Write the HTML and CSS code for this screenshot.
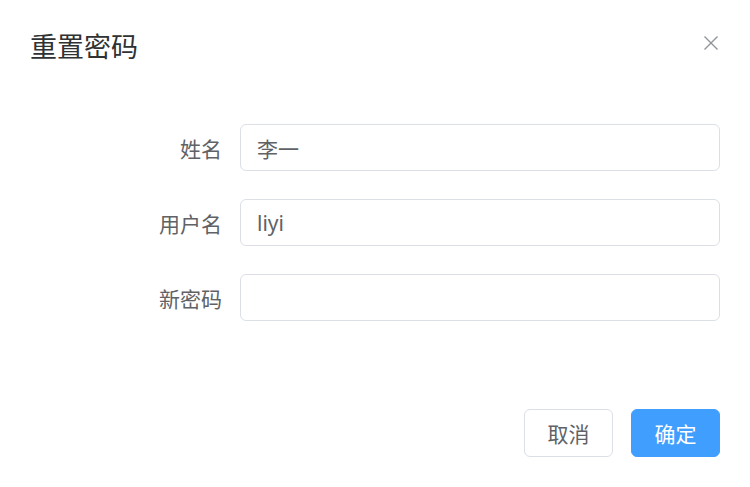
FILE: index.html
```html
<!DOCTYPE html>
<html lang="zh">
<head>
<meta charset="utf-8">
<title>重置密码</title>
<link rel="stylesheet" href="styles.css">
</head>
<body>
<div class="dialog">
  <div class="dialog-header">
    <span class="dialog-title">重置密码</span>
    <button class="dialog-close" aria-label="Close">
      <svg viewBox="0 0 16 16" width="16" height="16"><path d="M1.5 1.5 L14.5 14.5 M14.5 1.5 L1.5 14.5" stroke="#909399" stroke-width="1.4" fill="none"/></svg>
    </button>
  </div>
  <div class="dialog-body">
    <div class="form-item">
      <label class="form-label">姓名</label>
      <div class="form-content"><input class="input" type="text" value="李一"></div>
    </div>
    <div class="form-item">
      <label class="form-label">用户名</label>
      <div class="form-content"><input class="input" type="text" value="liyi"></div>
    </div>
    <div class="form-item">
      <label class="form-label">新密码</label>
      <div class="form-content"><input class="input" type="password" value=""></div>
    </div>
  </div>
  <div class="dialog-footer">
    <button class="btn btn-default">取消</button>
    <button class="btn btn-primary">确定</button>
  </div>
</div>
</body>
</html>
```
FILE: styles.css
```css
* { box-sizing: border-box; }
html, body {
  margin: 0;
  padding: 0;
  background: #ffffff;
}
body {
  font-family: "Noto Sans", "Noto Sans CJK SC", sans-serif;
  color: #606266;
}
.dialog {
  position: relative;
  width: 750px;
  height: 487px;
  background: #fff;
  border-radius: 4px;
}
.dialog-header {
  padding: 27px 30px 0;
  height: 64px;
}
.dialog-title {
  display: block;
  font-family: "Noto Sans CJK SC", sans-serif;
  font-size: 27px;
  line-height: 37px;
  color: #303133;
}
.dialog-close {
  position: absolute;
  top: 35px;
  right: 31px;
  width: 16px;
  height: 16px;
  padding: 0;
  border: 0;
  background: transparent;
  display: flex;
}
.dialog-body {
  padding: 60px 30px 0;
}
.form-item {
  display: flex;
  align-items: center;
  height: 47px;
  margin-bottom: 28px;
}
.form-item:last-child {
  margin-bottom: 0;
}
.form-label {
  width: 210px;
  padding-right: 18px;
  text-align: right;
  font-family: "Noto Sans CJK SC", sans-serif;
  font-size: 21px;
  color: #606266;
}
.form-content {
  flex: 1;
  height: 100%;
}
.input {
  display: block;
  width: 100%;
  height: 47px;
  padding: 0 16px;
  border: 1px solid #dcdfe6;
  border-radius: 6px;
  font-family: "Noto Sans", "Noto Sans CJK SC", sans-serif;
  font-size: 21px;
  color: #606266;
  background: #fff;
  outline: none;
}
.dialog-footer {
  display: flex;
  justify-content: flex-end;
  gap: 18px;
  padding: 88px 30px 30px;
}
.btn {
  height: 48px;
  padding: 0 22.5px;
  border-radius: 6px;
  font-family: "Noto Sans CJK SC", sans-serif;
  font-size: 21px;
  line-height: 1;
  cursor: pointer;
}
.btn-default {
  background: #fff;
  border: 1px solid #dcdfe6;
  color: #606266;
}
.btn-primary {
  background: #409eff;
  border: 1px solid #409eff;
  color: #fff;
}
```
